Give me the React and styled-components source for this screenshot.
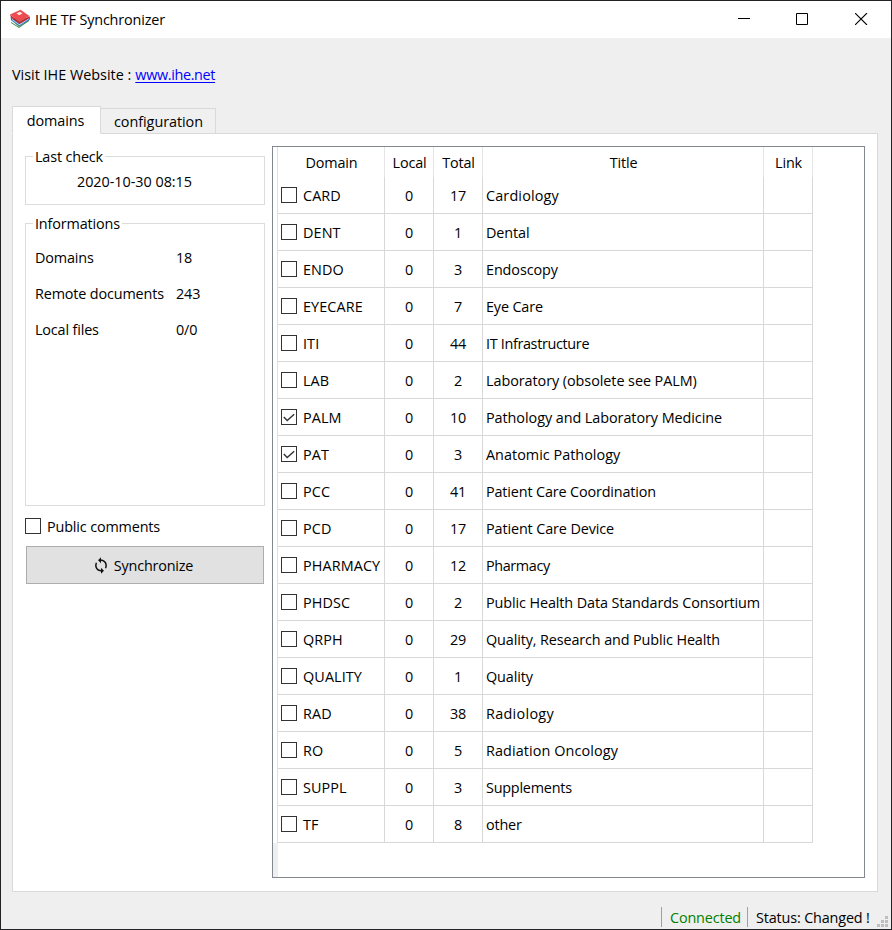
import React from "react";
import styled, { createGlobalStyle } from "styled-components";

const GlobalStyle = createGlobalStyle`
  * { box-sizing: border-box; }
  body { margin: 0; }
`;

const Window = styled.div`
  width: 892px;
  height: 930px;
  border: 1px solid #232225;
  background: #efefef;
  color: #000;
  font: 14.4px/20px "Open Sans", "Noto Sans", sans-serif;
  letter-spacing: -0.15px;
  white-space: nowrap;
  display: flex;
  flex-direction: column;
  overflow: hidden;
`;

const TitleBar = styled.header`
  height: 37px;
  flex: none;
  background: #fff;
  display: flex;
  align-items: center;
  padding: 0 23px 1px 8px;
`;

const Caption = styled.h1`
  font: inherit;
  margin: 0 auto 0 4px;
  padding-top: 2px;
`;

const Controls = styled.div`
  display: flex;
  gap: 46px;
  svg { display: block; }
  svg:last-child { margin-left: 1px; }
`;

const Visit = styled.p`
  margin: 27px 0 0 11px;
  height: 20px;
  flex: none;
  display: flex;
  gap: 4px;
  letter-spacing: 0;
`;

const Link = styled.a`
  color: #0000ff;
  text-decoration: underline;
  text-underline-offset: 2px;
  text-decoration-thickness: 1px;
  letter-spacing: -0.35px;
`;

const Tabs = styled.nav`
  margin: 21px 0 -1px 11px;
  height: 28px;
  flex: none;
  display: flex;
  align-items: flex-end;
  z-index: 1;
`;

const Tab = styled.button`
  font: inherit;
  letter-spacing: ${(p) => p.$track || "0"};
  color: #000;
  padding: ${(p) => (p.$active ? "2px 2px 0 0" : "2px 0 0 1px")};
  width: ${(p) => p.$width};
  height: ${(p) => (p.$active ? "28px" : "26px")};
  border: 1px solid #d9d9d9;
  border-left-width: ${(p) => (p.$active ? "1px" : "0")};
  border-bottom-color: ${(p) => (p.$active ? "#fff" : "#d9d9d9")};
  background: ${(p) => (p.$active ? "#fff" : "#f0f0f0")};
`;

const Pane = styled.main`
  width: 866px;
  height: 759px;
  flex: none;
  margin-left: 11px;
  border: 1px solid #d9d9d9;
  background: #fff;
  padding: 12px;
  display: flex;
  gap: 7px;
`;

const Sidebar = styled.aside`
  width: 240px;
  display: flex;
  flex-direction: column;
  align-items: stretch;
`;

const Group = styled.section`
  height: ${(p) => p.$height};
  margin-top: ${(p) => p.$gap};
  border: 1px solid #dcdcdc;
`;

const Legend = styled.h2`
  font: inherit;
  margin: -10px 0 0 7px;
  padding: 0 2px;
  width: max-content;
  background: #fff;
`;

const Stamp = styled.div`
  margin-top: 5px;
  padding-right: 21px;
  text-align: center;
  letter-spacing: -0.03px;
`;

const Facts = styled.dl`
  margin: 14px 0 0 9px;
  display: grid;
  grid-template-columns: 141px 1fr;
  row-gap: 16px;
  dt, dd { margin: 0; }
`;

const Check = styled.label`
  display: flex;
  align-items: center;
  gap: 6px;
`;

const Box = styled.span`
  width: 16px;
  height: 16px;
  flex: none;
  border: 1px solid #333;
  background: #fff;
  svg { display: block; }
`;

const Code = styled.span`
  padding-top: 2px;
  letter-spacing: 0.1px;
`;

const CommentsCheck = styled(Check)`
  margin-top: 9px;
`;

const CommentsText = styled.span`
  padding-top: 2px;
`;

const SyncButton = styled.button`
  width: 238px;
  height: 38px;
  margin: 9px 0 0 1px;
  padding: 1px 3px 0 0;
  font: inherit;
  letter-spacing: -0.2px;
  color: #000;
  background: #e1e1e1;
  border: 1px solid #adadad;
  display: flex;
  align-items: center;
  justify-content: center;
  gap: 6px;
  svg { margin-top: -1px; }
`;

const TableFrame = styled.div`
  width: 593px;
  height: 732px;
  border: 1px solid #828790;
  display: grid;
  grid-template-columns: 4px 1fr;
  grid-template-rows: 696px 1fr;
`;

const Gutter = styled.div`
  grid-row: 2;
  width: 5px;
  background: #efefef;
`;

const Table = styled.div`
  grid-column: 2;
  grid-row: 1;
  width: 536px;
  border-left: 1px solid #e0e0e0;
`;

const Row = styled.div`
  display: grid;
  grid-template-columns: 107px 49px 49px 281px 49px;
  height: ${(p) => (p.$head ? "30px" : "37px")};
`;

const Cell = styled.div`
  display: flex;
  align-items: center;
  justify-content: center;
  padding-top: 2px;
  border-right: 1px solid #d8d8d8;
  border-bottom: 1px solid #d8d8d8;
`;

const CheckCell = styled(Cell)`
  justify-content: flex-start;
  padding: 0 0 0 3px;
`;

const TitleCell = styled(Cell)`
  justify-content: flex-start;
  padding: 2px 0 0 3px;
  letter-spacing: ${(p) => p.$track}px;
`;

const HeadCell = styled(Cell)`
  padding-left: 1px;
  border-right-color: #e5e5e5;
  border-bottom: 0;
`;

const StatusBar = styled.footer`
  flex: 1;
  display: flex;
  justify-content: flex-end;
  padding: 15px 3px 0 0;
`;

const Status = styled.div`
  height: 20px;
  width: ${(p) => p.$width};
  padding: 1px 0 0 8px;
  border-left: 1px solid #a0a0a0;
  color: ${(p) => p.$color};
`;

const Grip = styled.svg`
  align-self: flex-end;
  margin-bottom: 2px;
  flex: none;
`;

const Books = () => (
  <svg width="22" height="20" viewBox="0 0 22 20">
    <path d="M2 11 12 6l8 4-10 8z" fill="#45a36c" />
    <path d="m2 13 8 5 10-8v2l-10 7-8-5z" fill="#3e8d54" />
    <path d="m1.500 8 9 7L21 8v2.500L10.500 17 2 11z" fill="#3f6fc0" />
    <path d="m3 10 7 5 10-6v1l-9.500 6.200L3 11z" fill="#c8d8ee" />
    <path d="m1 5.500 9.500 7.500L20.500 7v2L10.500 15 2 8.500z" fill="#bd2934" />
    <path d="m1 5.500 10.500-4.700 9 6.200-10 5.800z" fill="#ee4c50" />
    <path d="m7.500 4.300 3.500-1.500 2.500 1.800-3.500 1.700z" fill="#fbe9e7" />
  </svg>
);

const CheckBox = ({ on }) => (
  <Box>
    {on && (
      <svg width="14" height="14" viewBox="0 0 14 14">
        <path d="m1.800 7 3.400 3.500 7-6.300" fill="none" stroke="#333" strokeWidth="1.400" />
      </svg>
    )}
  </Box>
);

const SyncIcon = () => (
  <svg width="14" height="17" viewBox="3.500 0.500 17 23" fill="#111">
    <path d="M12 4V1L8 5l4 4V6c3.310 0 6 2.690 6 6 0 1.010-.25 1.970-.7 2.800l1.460 1.460C19.540 15.030 20 13.570 20 12c0-4.420-3.580-8-8-8zm0 14c-3.310 0-6-2.690-6-6 0-1.010.25-1.970.7-2.800L5.240 7.740C4.460 8.970 4 10.430 4 12c0 4.420 3.580 8 8 8v3l4-4-4-4v3z" />
  </svg>
);

const rows = [
  { code: "CARD", total: 17, title: "Cardiology", track: 0.15 },
  { code: "DENT", total: 1, title: "Dental", track: -0.1 },
  { code: "ENDO", total: 3, title: "Endoscopy", track: -0.1 },
  { code: "EYECARE", total: 7, title: "Eye Care", track: -0.15 },
  { code: "ITI", total: 44, title: "IT Infrastructure", track: -0.33 },
  { code: "LAB", total: 2, title: "Laboratory (obsolete see PALM)", track: -0.06 },
  { code: "PALM", total: 10, title: "Pathology and Laboratory Medicine", track: -0.06, on: true },
  { code: "PAT", total: 3, title: "Anatomic Pathology", track: 0.02, on: true },
  { code: "PCC", total: 41, title: "Patient Care Coordination", track: -0.15 },
  { code: "PCD", total: 17, title: "Patient Care Device", track: -0.12 },
  { code: "PHARMACY", total: 12, title: "Pharmacy", track: -0.38 },
  { code: "PHDSC", total: 2, title: "Public Health Data Standards Consortium", track: -0.11 },
  { code: "QRPH", total: 29, title: "Quality, Research and Public Health", track: -0.12 },
  { code: "QUALITY", total: 1, title: "Quality", track: -0.1 },
  { code: "RAD", total: 38, title: "Radiology", track: 0.3 },
  { code: "RO", total: 5, title: "Radiation Oncology", track: 0.1 },
  { code: "SUPPL", total: 3, title: "Supplements", track: -0.22 },
  { code: "TF", total: 8, title: "other", track: -0.2 },
];

export default function App() {
  return (
    <Window>
      <GlobalStyle />
      <TitleBar>
        <Books />
        <Caption>IHE TF Synchronizer</Caption>
        <Controls>
          <svg width="12" height="12"><path d="M0 5.500h12" stroke="#000" /></svg>
          <svg width="12" height="12"><path d="M.5.500h11v11H.5z" fill="none" stroke="#000" /></svg>
          <svg width="13" height="12"><path d="m0 0 12 12m0-12-12 12" stroke="#000" strokeWidth="1.100" /></svg>
        </Controls>
      </TitleBar>
      <Visit>
        <span>Visit IHE Website :</span>
        <Link href="#">www.ihe.net</Link>
      </Visit>
      <Tabs>
        <Tab $active $width="89px" $track="-0.1px">domains</Tab>
        <Tab $width="115px" $track="-0.05px">configuration</Tab>
      </Tabs>
      <Pane>
        <Sidebar>
          <Group $height="49px" $gap="10px">
            <Legend>Last check</Legend>
            <Stamp>2020-10-30 08:15</Stamp>
          </Group>
          <Group $height="283px" $gap="18px">
            <Legend>Informations</Legend>
            <Facts>
              <dt>Domains</dt><dd>18</dd>
              <dt>Remote documents</dt><dd>243</dd>
              <dt>Local files</dt><dd>0/0</dd>
            </Facts>
          </Group>
          <CommentsCheck>
            <CheckBox />
            <CommentsText>Public comments</CommentsText>
          </CommentsCheck>
          <SyncButton><SyncIcon />Synchronize</SyncButton>
        </Sidebar>
        <TableFrame>
          <Gutter />
          <Table>
            <Row $head>
              {["Domain", "Local", "Total", "Title", "Link"].map((h) => (
                <HeadCell key={h}>{h}</HeadCell>
              ))}
            </Row>
            {rows.map(({ code, total, title, track, on }) => (
              <Row key={code}>
                <CheckCell>
                  <Check><CheckBox on={on} /><Code>{code}</Code></Check>
                </CheckCell>
                <Cell>0</Cell>
                <Cell>{total}</Cell>
                <TitleCell $track={track}>{title}</TitleCell>
                <Cell />
              </Row>
            ))}
          </Table>
        </TableFrame>
      </Pane>
      <StatusBar>
        <Status $width="86px" $color="#008000">Connected</Status>
        <Status $width="130px" $color="#000">Status: Changed !</Status>
        <Grip width="11" height="11" fill="#bfbfbf">
          <path d="M8 0h3v3H8zM4 4h3v3H4zM8 4h3v3H8zM0 8h3v3H0zM4 8h3v3H4zM8 8h3v3H8z" />
        </Grip>
      </StatusBar>
    </Window>
  );
}
